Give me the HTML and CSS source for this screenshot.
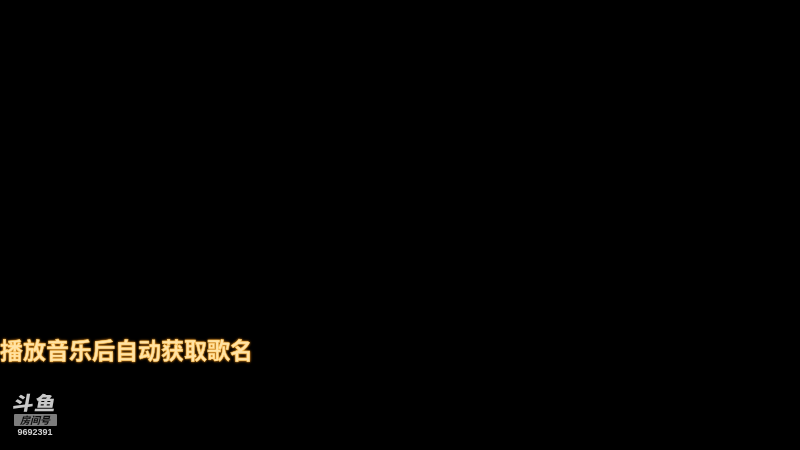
FILE: index.html
```html
<!DOCTYPE html>
<html lang="zh-CN">
<head>
    <meta charset="UTF-8">
    <meta name="viewport" content="width=device-width, initial-scale=1.0">
    <title>播放音乐后自动获取歌名</title>
    <link rel="stylesheet" href="styles.css">
</head>
<body>

    <main class="stream">
        <div class="song-title">播放音乐后自动获取歌名</div>

        <div class="room-badge">
            <div class="room-logo">斗鱼</div>
            <div class="room-label">房间号</div>
            <div class="room-number">9692391</div>
        </div>
    </main>

</body>
</html>
```

FILE: styles.css
```css
body {
    margin: 0;
    padding: 0;
    background-color: #000;
    font-family: "Noto Sans CJK SC", "Liberation Sans", sans-serif;
}

.stream {
    width: 800px;
    height: 450px;
    overflow: hidden;
    display: flex;
    flex-direction: column;
    justify-content: flex-end;
    align-items: flex-start;
}

.song-title {
    margin-left: 0;
    margin-bottom: 30px;
    font-size: 23px;
    line-height: 28px;
    font-weight: 700;
    white-space: nowrap;
    color: #ffe3a6;
    -webkit-text-stroke: 0.4px #ffc860;
    text-shadow: 0 0 2px #f09a20, 0 0 3px #c87010;
    filter: blur(0.5px);
}

.room-badge {
    width: 44px;
    margin-left: 13px;
    margin-bottom: 13px;
    display: flex;
    flex-direction: column;
    align-items: center;
    filter: blur(0.4px);
}

.room-logo {
    width: 44px;
    height: 19px;
    font-size: 21px;
    line-height: 19px;
    font-weight: 900;
    letter-spacing: 1px;
    text-align: center;
    white-space: nowrap;
    color: #c8c8c8;
    transform: skewX(-10deg) scaleY(0.9);
}

.room-label {
    width: 43px;
    height: 12px;
    margin-top: 2px;
    background-color: #7c7c7c;
    border-radius: 1px;
    font-size: 10px;
    line-height: 12px;
    font-weight: 700;
    text-align: center;
    font-style: italic;
    color: #0c0c0c;
}

.room-number {
    margin-top: 2px;
    font-family: "Liberation Sans", sans-serif;
    font-size: 9px;
    line-height: 9px;
    font-weight: 700;
    color: #cfcfcf;
}
```
